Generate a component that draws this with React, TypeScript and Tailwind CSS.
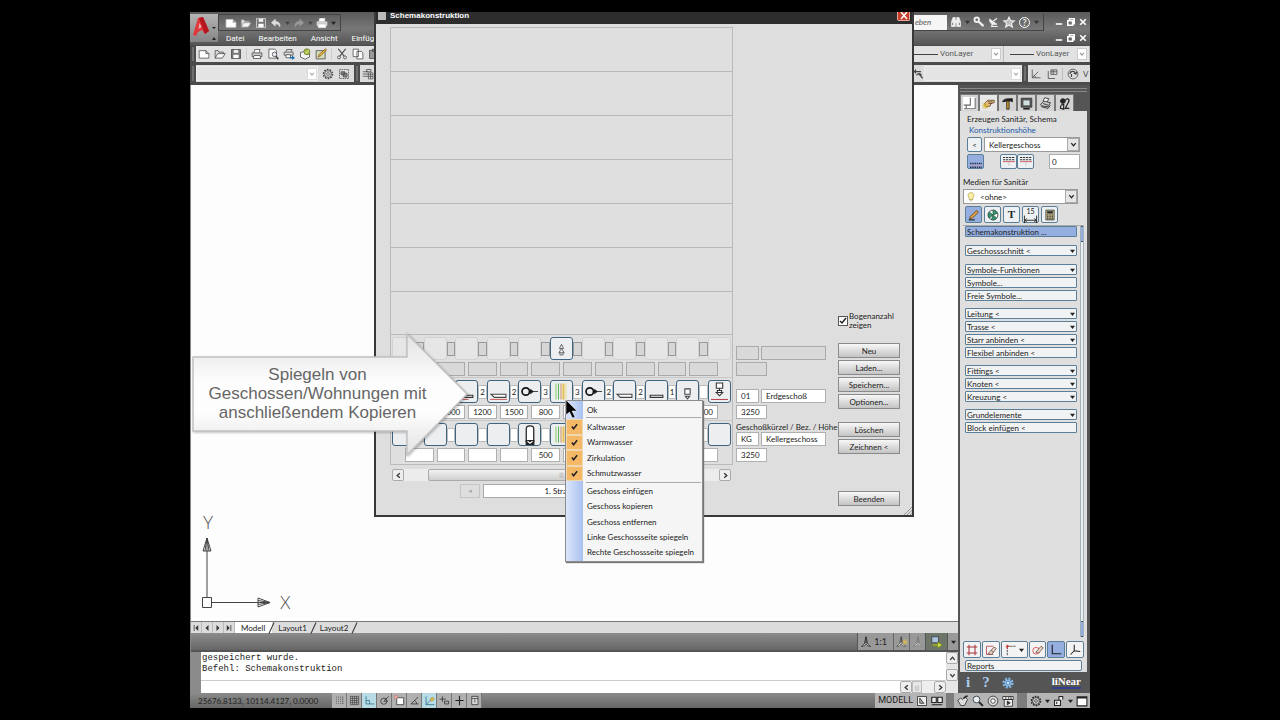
import type { ReactNode } from "react";
import clsx from "clsx";

const glyphs: Record<string, ReactNode> = {
  page: <path d="M1.5 3.5h9l4 4v6h-13zM10.5 3.5v4h4" fill="#fff" />,
  open: (
    <>
      <path d="M1.5 13.500V3.500h4l1 2h6v3" fill="#ddd" />
      <path d="M1.500 13.500l3.500-6h10l-4 6z" fill="#f6f6f6" />
    </>
  ),
  save: (
    <>
      <path d="M2 2h12v12H2z" fill="#777" />
      <path d="M5 2.500h6v4H5z" fill="#eee" stroke="none" />
      <path d="M4.500 9h7v4.500h-7z" fill="#fff" stroke="none" />
    </>
  ),
  undo: <path d="M13 13c1-5-2-7-6-7V3L2 7.500 7 12V9c3 0 5 1 6 4z" fill="currentColor" />,
  redo: <path d="M3 13c-1-5 2-7 6-7V3l5 4.500L9 12V9c-3 0-5 1-6 4z" fill="currentColor" />,
  printer: (
    <>
      <path d="M4 6l1-4h7l-1 4" fill="#fff" />
      <path d="M1.500 6.500h13v5h-13z" fill="#ccc" />
      <path d="M4 10h8l1 4H3z" fill="#fff" />
    </>
  ),
  preview: (
    <>
      <path d="M2.500 1.500h8l2 2v10h-10z" fill="#fff" />
      <circle cx="10" cy="8.500" r="3" fill="#e8eef4" />
      <path d="M12 11l3 4" strokeWidth="2" />
    </>
  ),
  plot: (
    <>
      <path d="M4 5l1-3h7l-1 3M1.500 5.500h12v4h-12z" fill="#ddd" />
      <path d="M4 9h6v4H4z" fill="#fff" />
      <path d="M9 12h3v-2l4 3-4 3v-2H9z" fill="#1d6cb0" stroke="none" />
    </>
  ),
  publish: (
    <>
      <path d="M2 6l7-2 5 2v6l-6 3-6-3z" fill="#f4f4f4" />
      <circle cx="10.500" cy="5" r="4" fill="#a8bd3f" stroke="#66752a" />
      <path d="M8 5l2 2 3-4" stroke="#eef4c0" />
    </>
  ),
  edit: (
    <>
      <path d="M1.500 3.500h12v11h-12z" fill="#d5dcbc" />
      <path d="M4 12l2-4 8-7 1.500 1.500L8 10z" fill="#e5b64b" stroke="#7c5a17" />
    </>
  ),
  cut: (
    <>
      <path d="M3 1l8 10M13 1L5 11" strokeWidth="1.600" />
      <circle cx="4" cy="12.500" r="2" />
      <circle cx="12" cy="12.500" r="2" />
    </>
  ),
  copy: <path d="M1.500 1.500h7v10h-7zM6.500 4.500h6l2 2v8h-8z" fill="#fff" />,
  paste: <path d="M2 3h12v11H2zM6 1.500h4v3H6z" fill="#999" />,
  gear: (
    <>
      <circle cx="8" cy="8" r="6" strokeWidth="2" strokeDasharray="2.200 1.500" />
      <circle cx="8" cy="8" r="4.500" fill="#ddd" />
      <circle cx="8" cy="8" r="1.800" fill="#fff" />
    </>
  ),
  blueGear: (
    <>
      <circle cx="8" cy="8" r="5.500" stroke="#7fb4e4" strokeWidth="4" strokeDasharray="2.500 1.800" />
      <circle cx="8" cy="8" r="4" fill="#5f9cd8" stroke="#a9cdec" />
      <circle cx="8" cy="8" r="1.500" fill="#e6f2fc" stroke="none" />
    </>
  ),
  blocks: (
    <>
      <path d="M2 2h12v12H2z" strokeDasharray="2 1" />
      <path d="M4 5h5v4H4zM7 7h5v5H7z" fill="#888" />
    </>
  ),
  table: (
    <>
      <path d="M1 5h7M1 8h7M1 11h7M6 2h6v3H6z" />
      <path d="M8.500 6.500h6v8h-6zM8.500 9h6M8.500 11.500h6M11.500 6.500v8" fill="#eee" />
    </>
  ),
  binoculars: (
    <>
      <path d="M2 14V8l2-6h3v12zM14 14V8l-2-6H9v12z" fill="#eee" />
      <path d="M6 6h4v3H6z" fill="#eee" />
      <path d="M3.500 9v3M12.500 9v3" stroke="#555" />
    </>
  ),
  key: (
    <>
      <circle cx="5" cy="5" r="3" strokeWidth="2.500" />
      <path d="M7.500 7.500l6.500 6" strokeWidth="3" />
    </>
  ),
  dish: (
    <>
      <path d="M2 4c0 6 4 9 10 7z" fill="#eee" />
      <path d="M7 7l5-4M4 14h9M6 10l-1 4" strokeWidth="1.600" />
    </>
  ),
  star: <path d="M8 1.500l2 4.500 5 .5-3.700 3.300 1.200 5L8 12l-4.500 2.800 1.200-5L1 6.500 6 6z" fill="#bbb" strokeWidth="1.500" />,
  axes: <path d="M3 2v11h11M3 13l8-8M5 9l3 4" />,
  axesTable: <path d="M3 4v10h9M6.500 2.500h8v6h-8zM6.500 5h8M9.500 2.500v6" />,
  swirl: (
    <>
      <circle cx="8" cy="8" r="6.500" fill="#ddd" />
      <path d="M4 8c0-4 6-5 7-1M9 7l3 1 1-3M6 8v4" strokeWidth="1.500" />
    </>
  ),
  zoomArrow: <path d="M1 4h10M3 1l-2 3 2 3M4 10c3-4 6-3 8 0M8 8l6 7" strokeWidth="2" />,
  plan: (
    <>
      <path d="M0 0h16v16H0z" fill="#fff" stroke="none" />
      <path d="M9 1v9H1M1 14.500h14V1M4 10v4" stroke="#666" strokeWidth="1.300" />
    </>
  ),
  hand: (
    <>
      <path d="M3 8l4-4h8v3l-4 1-1 3-4 1H5z" fill="#e9c08a" stroke="#5d4524" />
      <path d="M7 6h6M8 8h4" stroke="#5d4524" />
      <path d="M4 7v8M0 11h8M1 8l6 6M7 8l-6 6" stroke="#d8b21e" />
    </>
  ),
  hammer: (
    <>
      <path d="M2 6c1-4 5-4 12-4v4l-2-1H7z" fill="#222" />
      <path d="M7 5h3v10H7z" fill="#d09a2a" />
    </>
  ),
  monitor: (
    <>
      <path d="M1.500 1.500h13v11h-13z" fill="#777" />
      <path d="M3.500 3.500h9v7.500h-9z" fill="#cfe0e0" />
      <path d="M4 14.500h8" strokeWidth="2" />
    </>
  ),
  printerSmall: (
    <>
      <path d="M5 5l2-4 5 1-2 4" fill="#fff" />
      <path d="M2 9l4-4 8 2-3 5-8-1z" fill="#ccc" />
      <path d="M3 12l8 2 3-4M5 8l6 2" />
    </>
  ),
  persons: (
    <>
      <circle cx="6" cy="5" r="3" fill="#222" />
      <path d="M3 14c0-4 1-5 4-5v6zM9 4c4-4 6 0 3 4l-3 6h5" strokeWidth="1.500" />
    </>
  ),
  floorBlue: (
    <>
      <path d="M0 10h16M0 15h16" stroke="#26314f" strokeWidth="2" strokeDasharray="2 1" />
      <path d="M0 12.500h16" stroke="#c9a" />
    </>
  ),
  floorUp: (
    <>
      <path d="M0 2h16M0 5h16" stroke="#333" strokeWidth="1.500" strokeDasharray="3 1" />
      <path d="M0 7.500h16" stroke="#c33" />
      <path d="M8 8v5" stroke="#bbb" />
    </>
  ),
  pencil: (
    <>
      <path d="M3 10l8-8 3 2-8 8-4 1z" fill="#e0a04a" stroke="#5b3c10" />
      <path d="M1 14.500h8" stroke="#222" strokeWidth="1.500" />
    </>
  ),
  globe: (
    <>
      <circle cx="8" cy="8" r="6.500" fill="#fff" />
      <path d="M8 8L3 4c-2 2-2 6 0 8zM8 8V1.500c3 0 5 2 6 4zM8 8l5 4c-2 3-5 3-7 2z" fill="#37906f" stroke="#24604a" />
    </>
  ),
  dimension: <path d="M1.500 7v8M14.500 7v8M2 12h12M4 10l-2 2 2 2M12 10l2 2-2 2" />,
  calculator: (
    <>
      <path d="M2.500 1.500h11v13h-11z" fill="#d9cf9e" />
      <path d="M4.500 3.500h7v2h-7z" fill="#333" />
      <path d="M4 8h8M4 10.500h8M4 13h8" strokeDasharray="2 1" strokeWidth="1.600" />
    </>
  ),
  frameRed: <path d="M4 1v14M12 1v14M1 4h14M1 12h14" stroke="#a8333f" strokeWidth="1.400" />,
  eraseGrid: (
    <>
      <path d="M2 3h9M2 3v11h9" stroke="#a8333f" />
      <path d="M4 13l8-9 3 2-6 8z" fill="#e8d3c5" stroke="#66453c" />
      <path d="M8 8.500l3.500 2.500" stroke="#66453c" />
    </>
  ),
  corner: (
    <>
      <path d="M3 15V3h12" stroke="#222" strokeDasharray="3 1" />
      <path d="M1 3h5M3 1v5" stroke="#c33" strokeWidth="1.500" />
    </>
  ),
  eraseCircle: (
    <>
      <circle cx="5.500" cy="9" r="4.500" stroke="#c33" />
      <path d="M5 11l7-8 3 2-6 7z" fill="#e8d3c5" stroke="#66453c" />
    </>
  ),
  ell: <path d="M3 1v12h12" strokeWidth="1.500" />,
  wye: <path d="M7 1v8M7 9l8 1M7 9l-5 5" strokeWidth="1.400" />,
  dots: <path d="M3 3h11M3 6h11M3 9h11M3 12h11M13 3v11" strokeDasharray="1 2" />,
  mesh: <path d="M2 2h12v12H2zM5 2v12M8 2v12M11 2v12M2 5h12M2 8h12M2 11h12" strokeWidth="0.700" />,
  step: <path d="M3 2v11h12M3 8h5v5" stroke="#14617c" />,
  polar: (
    <>
      <circle cx="7" cy="9" r="4.500" />
      <path d="M7 9l7-7M7 9h6" />
    </>
  ),
  osnap: (
    <>
      <path d="M4 4h10v10H4z" fill="#fff" />
      <path d="M1 1h4v4H1z" fill="#eab9a7" stroke="#c77" />
    </>
  ),
  angle: <path d="M13 3L3 13h11M8 8c2 1 3 3 3 5" />,
  ducs: (
    <>
      <path d="M3 2v12h12M3 14l7-7" stroke="#14617c" />
      <path d="M9 7l3-4 3 3-4 3z" fill="#e5c04b" stroke="#a38421" />
    </>
  ),
  dyn: <path d="M1 6h9M5 2v8M8 9h6v4H8z" />,
  plus: <path d="M8 1v14M2 8h12" strokeWidth="1.600" />,
  props: <path d="M4 2h9v12H4zM4 5h9M8.500 6v5" fill="#ddd" />,
  scale: <path d="M8 1v7l-6 6 4-1 2-3 2 3 4 1-6-6M8 1L6 9M8 1l2 8" fill="#ddd" />,
  scaleSun: (
    <>
      <path d="M7 1v7l-6 6 4-1 2-3 2 3 4 1-6-6M7 1L5 9M7 1l2 8" fill="#fff" />
      <path d="M12 4v8M8 8h8M9 5l6 6M15 5l-6 6" stroke="#e5c04b" />
    </>
  ),
  layoutA: <path d="M2 2h12v12H2zM5 4v7h6M5 4l5 7" fill="#eee" />,
  layoutB: <path d="M1 3h6v7H1zM9 3h6v7H9zM1 13h14" fill="#eee" strokeWidth="1.500" />,
  pan: (
    <>
      <path d="M1 7l4-3 2 2 4-3 3 3-4 8H5z" fill="#ddd" />
      <path d="M9 4l5-3" strokeWidth="2" />
    </>
  ),
  lens: (
    <>
      <circle cx="6" cy="6" r="4.500" fill="#e6f0f6" />
      <path d="M9.500 9.500l5 5" strokeWidth="2.500" />
    </>
  ),
  wheel: (
    <>
      <circle cx="8" cy="8" r="6.500" fill="#ddd" />
      <circle cx="8" cy="8" r="3" fill="#fff" />
    </>
  ),
  motion: (
    <>
      <path d="M1 2h14v4H1zM3 6h11v9H3z" fill="#eee" />
      <path d="M5 2v4M9 2v4M12 2v4M7 8v5l4-2.500z" fill="#444" />
    </>
  ),
  lock: <path d="M2 7h8v7H2zM8 7V2h5v4M5 9v3" fill="#eee" strokeWidth="1.400" />,
  screen: <path d="M1.500 2.500h13v12h-13zM1.500 4h13" fill="#fff" strokeWidth="1.400" />,
  sync: (
    <>
      <path d="M1 1h9v8H1z" fill="#a9c4dc" stroke="#334" />
      <path d="M2 11h7V8l6 4-6 4v-3H2z" fill="#d3e03b" stroke="#6d8320" />
    </>
  ),
  up: <path d="M3 11l5-6 5 6" strokeWidth="3" />,
  down: <path d="M3 5l5 6 5-6" strokeWidth="3" />,
  left: <path d="M11 3L5 8l6 5" strokeWidth="3" />,
  right: <path d="M5 3l6 5-6 5" strokeWidth="3" />,
  bulb: <path d="M5 9C1 4 5 1 8 1s7 3 3 8v3H5zM6 14h4" fill="#fbf0a5" stroke="#9c8f3b" />,
  tub: (
    <>
      <path d="M1 10.500h14v3H4z" fill="#fff" stroke="#444" />
      <path d="M0 15.500h16" stroke="#c66" />
    </>
  ),
  tray: <path d="M1 10.500h14v3H4z" fill="#fff" stroke="#444" />,
  slab: (
    <>
      <path d="M3 11.500h11v2H3z" stroke="#333" fill="#fff" />
      <path d="M0 15.500h10" stroke="#c66" />
    </>
  ),
  slabPlain: <path d="M2 11.500h12v2H2z" stroke="#333" fill="#fff" />,
  valve: (
    <>
      <circle cx="4.500" cy="8" r="3.500" stroke="#111" strokeWidth="1.600" />
      <path d="M8 8h8M9 6l2.500 2L9 10z" stroke="#111" fill="#111" strokeWidth="0.700" />
    </>
  ),
  sink: <path d="M5.500 5.500h5v5h-5zM6 12.500h4l-2 2.500z" stroke="#444" fill="#fff" />,
  washer: (
    <>
      <path d="M5 0h6v5H5zM8 5v2M6 7h4v2H6zM5 9h6l-3 3z" stroke="#333" fill="#fff" />
      <path d="M0 15.500h16" stroke="#b45" />
    </>
  ),
  vent: <path d="M8 4l-2 4h4zM8 8l-2.500 4h5zM6.500 12v2h3v-2" stroke="#555" strokeWidth="0.800" />,
  boiler: (
    <>
      <path d="M5 3c0-3 6-3 6 0v10H5z" stroke="#222" fill="#fff" />
      <path d="M4.500 12h7v4h-7z" fill="#222" stroke="none" />
      <path d="M6 13l2 1.500 2-1.500" stroke="#fff" />
    </>
  ),
  risers: (
    <>
      <path d="M3 0v16" stroke="#b9dfa8" strokeWidth="2" />
      <path d="M5.500 0v16" stroke="#5ab65a" />
      <path d="M8 0v16" stroke="#cf8f5f" />
      <path d="M10.500 0v16" stroke="#e6c14e" strokeWidth="2" />
      <path d="M13 0v16" stroke="#ecdf9a" />
    </>
  ),
};

function Glyph({ name, className = "size-3" }: { name: string; className?: string }) {
  return (
    <svg viewBox="0 0 16 16" fill="none" stroke="currentColor" aria-hidden="true" className={clsx("shrink-0 overflow-visible", className)}>
      {glyphs[name]}
    </svg>
  );
}

function IconButton({ name, label, className, glyph }: { name: string; label: string; className?: string; glyph?: string }) {
  return (
    <button type="button" aria-label={label} className={clsx("flex items-center justify-center", className)}>
      <Glyph name={name} className={glyph} />
    </button>
  );
}

function Caret({ className = "text-[#222]" }: { className?: string }) {
  return (
    <svg viewBox="0 0 8 6" aria-hidden="true" className={clsx("h-1 w-[5px] shrink-0", className)}>
      <path d="M0 1h8L4 6z" fill="currentColor" />
    </svg>
  );
}

function WindowControls() {
  return (
    <div className="flex gap-px text-white">
      {["Minimieren", "Wiederherstellen", "Schließen"].map((label, i) => (
        <button key={label} type="button" aria-label={label} className="flex h-3 w-[11px] items-center justify-center">
          <svg viewBox="0 0 10 10" className="size-2" fill="none" stroke="currentColor" strokeWidth="2" aria-hidden="true">
            {i === 0 && <path d="M1 7.500h8" />}
            {i === 1 && <path d="M3 3V1h6v6H7M1 3.500h6V9H1z" />}
            {i === 2 && <path d="M1.500 1.500l7 7M8.500 1.500l-7 7" />}
          </svg>
        </button>
      ))}
    </div>
  );
}

const menus = ["Datei", "Bearbeiten", "Ansicht", "Einfügen"];

function TitleBar() {
  return (
    <header className="flex h-[33px] shrink-0 justify-between bg-gradient-to-b from-[#5a5a5a] via-[#777] to-[#555] pt-0.5">
      <div className="flex">
        <button type="button" aria-label="Anwendungsmenü" className="flex h-7 w-7 items-center bg-gradient-to-b from-[#b5b5b5] to-[#858585]">
          <svg viewBox="0 0 28 28" className="size-7" aria-hidden="true">
            <path d="M3 21L8 4l5-1 6 14-4 3-3-4-4 2-2 4z" fill="#e0393c" />
            <path d="M9 4l4-1 6 14-4 3z" fill="#b3161d" />
            <path d="M9.500 9l2 4-3 2z" fill="#f2b4b4" />
            <path d="M22 13h4l-2 2zM22 26l2-3 2 3z" fill="#222" />
          </svg>
        </button>
        <div>
          <div className="flex h-[17px] w-[123px] items-center gap-[3px] border border-[#444] px-1.5 text-[#ddd]">
            <IconButton name="page" label="Neu" />
            <IconButton name="open" label="Öffnen" className="text-[#888]" />
            <IconButton name="save" label="Speichern" />
            <IconButton name="undo" label="Rückgängig" />
            <Caret className="text-[#444]" />
            <IconButton name="redo" label="Wiederherstellen" className="text-[#999]" />
            <Caret className="text-[#444]" />
            <IconButton name="printer" label="Drucken" className="text-[#eee]" />
            <Caret />
          </div>
          <nav className="flex gap-3.5 pl-2 pt-0.5 font-['Roboto',sans-serif] text-[8px] leading-3 text-white">
            {menus.map((item) => (
              <button key={item} type="button">
                {item}
              </button>
            ))}
          </nav>
        </div>
      </div>
      <div className="flex w-[176px] justify-between">
        <div className="flex h-[17px] items-center gap-[3px] border-b border-r border-[#444] pr-1 text-[#eee]">
          <input aria-label="Suche" defaultValue="eben" className="h-[15px] w-[33px] bg-[#f6f6f6] pl-px text-[8px] italic text-[#555] outline-none" />
          <IconButton name="binoculars" label="Suchen" />
          <Caret className="text-[#333]" />
          <IconButton name="key" label="Abonnement" />
          <IconButton name="dish" label="Kommunikation" />
          <IconButton name="star" label="Favoriten" />
          <button type="button" aria-label="Hilfe" className="mx-px flex size-[11px] items-center justify-center rounded-full border border-white text-[9px] font-bold leading-none">
            ?
          </button>
          <Caret className="text-[#333]" />
        </div>
        <div className="flex flex-col gap-1 pr-0.5 pt-0.5">
          <WindowControls />
          <WindowControls />
        </div>
      </div>
    </header>
  );
}

function LineTypeSelect({ label, className }: { label: string; className?: string }) {
  return (
    <div className={clsx("flex h-full items-center gap-0.5 border-r border-[#bbb]", className)}>
      <span className="h-px w-6 shrink-0 bg-[#444]" />
      <span className="relative flex h-full flex-1 items-center">
        <select aria-label={label} className="w-full appearance-none font-['Roboto',sans-serif] text-[8px] text-[#555] outline-none">
          <option>VonLayer</option>
        </select>
        <span className="pointer-events-none absolute right-0.5 flex h-3 w-2.5 items-center justify-center border border-[#ccc] bg-white text-[#999]">
          <Glyph name="down" className="size-1.5" />
        </span>
      </span>
    </div>
  );
}

function EmptySelect({ label, className }: { label: string; className?: string }) {
  return (
    <span className={clsx("relative flex h-[15px] items-center border border-[#eee] bg-[#e4e4e4]", className)}>
      <select aria-label={label} className="h-full w-full appearance-none outline-none" />
      <span className="pointer-events-none absolute right-0 flex h-3 w-2.5 items-center justify-center border border-[#ddd] bg-white text-[#aaa]">
        <Glyph name="down" className="size-1.5" />
      </span>
    </span>
  );
}

function Grip() {
  return <span className="mx-0.5 my-px w-0.5 shrink-0 self-stretch bg-[#6f6f6f]" />;
}

function Toolbars() {
  return (
    <div className="flex shrink-0 flex-col gap-[3px] bg-[#4b4b4b] pb-[3px] pt-px text-[#444]">
      <div className="flex h-4 justify-between">
        <div className="flex">
          <Grip />
          <div className="flex items-center gap-1 bg-[#e2e2e2] px-0.5">
            <IconButton name="page" label="Neu" />
            <IconButton name="open" label="Öffnen" />
            <IconButton name="save" label="Speichern" />
            <span className="h-3 w-px bg-[#ccc]" />
            <IconButton name="printer" label="Drucken" />
            <IconButton name="preview" label="Vorschau" />
            <IconButton name="plot" label="Plotten" />
            <IconButton name="publish" label="Publizieren" />
            <IconButton name="edit" label="Bearbeiten" />
            <span className="h-3 w-px bg-[#ccc]" />
            <IconButton name="cut" label="Ausschneiden" />
            <IconButton name="copy" label="Kopieren" />
            <IconButton name="paste" label="Einfügen" />
          </div>
        </div>
        <div className="flex w-[176px] items-center bg-[#e2e2e2]">
          <LineTypeSelect label="Linientyp" className="w-[90px]" />
          <LineTypeSelect label="Linienstärke" className="flex-1 pl-1.5" />
        </div>
      </div>
      <div className="flex h-[17px] justify-between">
        <div className="flex">
          <Grip />
          <div className="flex items-center gap-1 bg-[#dcdcdc] pr-1">
            <EmptySelect label="Arbeitsbereich" className="w-[122px]" />
            <IconButton name="gear" label="Einstellungen" />
            <IconButton name="blocks" label="Arbeitsbereich speichern" />
          </div>
          <Grip />
          <div className="flex items-center bg-[#dcdcdc] px-0.5">
            <IconButton name="table" label="Layer" />
          </div>
        </div>
        <div className="flex w-[176px]">
          <div className="flex flex-1 items-center bg-[#dcdcdc]">
            <IconButton name="zoomArrow" label="Layer vorher" glyph="size-2.5" />
            <EmptySelect label="Benutzerkoordinatensystem" className="flex-1" />
          </div>
          <Grip />
          <div className="flex w-[62px] items-center gap-1 overflow-hidden bg-[#dcdcdc] pl-0.5 text-[8px]">
            <IconButton name="axes" label="BKS" />
            <IconButton name="axesTable" label="BKS-Liste" />
            <span className="h-3 w-px shrink-0 bg-[#bbb]" />
            <IconButton name="swirl" label="Ansichten" />
            <span>V</span>
          </div>
        </div>
      </div>
    </div>
  );
}

function UcsIcon() {
  return (
    <svg viewBox="0 0 100 104" className="mb-2 ml-1.5 h-[104px] w-[100px]" fill="none" stroke="#444" aria-hidden="true">
      <path d="M5.500 88.500h9v10h-9zM10 88.500V29M14.500 93.500H73" />
      <path d="M10 29L6 42h8zM8 42l2-13 2 13" />
      <path d="M73 93.500L61 89v9zM61 91.500l12 2-12 2" />
      <text x="6" y="20" fontSize="17" fontWeight="300" fill="#444" stroke="none" fontFamily="Lato, sans-serif">
        Y
      </text>
      <text x="83" y="100" fontSize="17" fontWeight="300" fill="#444" stroke="none" fontFamily="Lato, sans-serif">
        X
      </text>
    </svg>
  );
}

const layoutTabs = ["Modell", "Layout1", "Layout2"];

const tabArrows = [
  { label: "Erstes", d: "M1 0h1v8H1zM7 0L3 4l4 4z" },
  { label: "Zurück", d: "M6 0L2 4l4 4z" },
  { label: "Weiter", d: "M2 0l4 4-4 4z" },
  { label: "Letztes", d: "M6 0h1v8H6zM1 0l4 4-4 4z" },
];

function DrawingArea() {
  return (
    <main className="flex min-w-0 flex-1 flex-col border-l border-[#888]">
      <div className="flex flex-1 items-end bg-[#fdfdfd]">
        <UcsIcon />
      </div>
      <div className="flex h-3 shrink-0 items-center border-t border-[#777] bg-[#dcdcdc] text-[8px] leading-none text-[#222]">
        {tabArrows.map((arrow) => (
          <button key={arrow.label} type="button" aria-label={arrow.label} className="flex h-full w-[11px] items-center justify-center border-r border-[#bbb]">
            <svg viewBox="0 0 8 8" className="size-1.5" aria-hidden="true">
              <path d={arrow.d} fill="#333" />
            </svg>
          </button>
        ))}
        {layoutTabs.map((tab, i) => (
          <button key={tab} type="button" className={clsx("flex h-full items-center gap-1.5 pl-1.5", i === 0 && "bg-white")}>
            {tab}
            <span className="h-3 w-px rotate-[25deg] bg-[#333]" />
          </button>
        ))}
      </div>
      <div className="flex h-[17px] shrink-0 justify-end bg-gradient-to-b from-[#8c8c8c] to-[#666]">
        <div className="flex items-center border-l border-[#555] bg-[#999] text-[9px] text-[#222]">
          <button type="button" className="flex items-center gap-0.5 pl-0.5 pr-1.5">
            <Glyph name="scale" />
            1:1
          </button>
          <IconButton name="scaleSun" label="Beschriftung" className="h-full w-4 border-l border-[#666] text-[#444]" />
          <IconButton name="scale" label="Automatisch" className="h-full w-4 border-l border-[#666] text-[#777]" />
          <span className="flex h-full w-[23px] items-center justify-center border-x border-[#555] bg-[#6d7569]">
            <IconButton name="sync" label="Synchronisieren" />
          </span>
          <span className="flex w-2.5 justify-center">
            <Caret />
          </span>
        </div>
      </div>
      <div className="flex h-[43px] shrink-0 border-t-2 border-[#555] bg-white">
        <span className="w-2.5 shrink-0 bg-[#8b8b8b]" />
        <div className="flex flex-1 flex-col">
          <div className="flex-1 border-b border-[#ccc] pl-px pt-px font-['Liberation_Mono',monospace] text-[9px] leading-[11px] text-[#222]">
            <p>gespeichert wurde.</p>
            <p>Befehl: Schemakonstruktion</p>
          </div>
          <div className="flex h-3 justify-end">
            <input aria-label="Befehlszeile" className="min-w-0 flex-1 outline-none" />
            <ScrollButton name="left" label="Nach links" />
            <span className="flex w-2.5 items-center justify-center border border-[#bbb] bg-[#e8e8e8] text-[6px] text-[#999]">|||</span>
            <span className="w-3 bg-[#eee]" />
            <ScrollButton name="right" label="Nach rechts" />
          </div>
        </div>
        <div className="flex w-3 flex-col justify-between bg-[#e6e6e6] pb-3">
          <ScrollButton name="up" label="Nach oben" />
          <ScrollButton name="down" label="Nach unten" />
        </div>
      </div>
    </main>
  );
}

function ScrollButton({ name, label }: { name: string; label: string }) {
  return <IconButton name={name} label={label} glyph="size-[7px]" className="h-3 w-3 shrink-0 rounded-[2px] border border-[#aaa] bg-[#eee] text-[#333]" />;
}

const paletteTabs = ["plan", "hand", "hammer", "monitor", "printerSmall", "persons"];

const commandGroups = [
  [{ text: "Schemakonstruktion ...", active: true }],
  [{ text: "Geschossschnitt <", menu: true }],
  [{ text: "Symbole-Funktionen", menu: true }, { text: "Symbole..." }, { text: "Freie Symbole..." }],
  [{ text: "Leitung <", menu: true }, { text: "Trasse <", menu: true }, { text: "Starr anbinden <", menu: true }, { text: "Flexibel anbinden <" }],
  [{ text: "Fittings <", menu: true }, { text: "Knoten <", menu: true }, { text: "Kreuzung <", menu: true }],
  [{ text: "Grundelemente", menu: true }, { text: "Block einfügen <" }],
] as { text: string; menu?: boolean; active?: boolean }[][];

const boxed = "rounded-[2px] border border-[#5b7f99] bg-[#eef1f3]";

function PaletteSelect({ label, value, icon }: { label: string; value: string; icon?: string }) {
  return (
    <span className="relative flex h-[15px] flex-1 items-center border border-[#999] bg-white">
      {icon && <Glyph name={icon} className="ml-0.5 size-2.5" />}
      <select aria-label={label} className="h-full w-full appearance-none pl-1 leading-none outline-none">
        <option>{value}</option>
      </select>
      <span className="pointer-events-none absolute right-0 flex h-[13px] w-3 items-center justify-center border border-[#aaa] bg-[#e6e6e6]">
        <Glyph name="down" className="size-[7px]" />
      </span>
    </span>
  );
}

function ToolPalette() {
  return (
    <aside className="flex w-[132px] shrink-0 flex-col bg-[#555] pl-[2px] pr-[3px] text-[8px] leading-none text-[#222]">
      <div className="mb-0.5 mt-[3px] h-1 shrink-0 border-y border-[#888]" />
      <div className="flex h-[17px] shrink-0">
        {paletteTabs.map((tab, i) => (
          <IconButton
            key={tab}
            name={tab}
            label={`Palette ${i + 1}`}
            glyph="size-[13px]"
            className={clsx("w-[19px] border border-b-0 border-[#777]", i === 1 ? "bg-[#e8e8e8]" : "bg-[#d2d2d2]")}
          />
        ))}
      </div>
      <div className="flex flex-1 flex-col bg-[#dfdfdf] px-[3px] pt-1">
        <p className="pl-1">Erzeugen Sanitär, Schema</p>
        <fieldset className="px-1">
          <legend className="px-0.5 pt-[3px] text-[#1c5aa8]">Konstruktionshöhe</legend>
          <div className="mt-[3px] flex gap-0.5">
            <button type="button" className={clsx("h-[15px] w-[15px]", boxed)}>
              &lt;
            </button>
            <PaletteSelect label="Geschoss" value="Kellergeschoss" />
          </div>
          <div className="mt-0.5 flex items-center">
            <IconButton name="floorBlue" label="Höhe aktiv" className="h-[15px] w-[17px] rounded-[2px] border border-[#5b7f99] bg-[#94aee0]" />
            <span className="w-4" />
            <IconButton name="floorUp" label="Geschoss höher" className={clsx("h-[15px] w-[17px]", boxed)} />
            <IconButton name="floorUp" label="Geschoss tiefer" className={clsx("h-[15px] w-[17px]", boxed)} />
            <input aria-label="Höhe" defaultValue="0" className="ml-auto h-[15px] w-[31px] border border-[#aaa] bg-white pl-0.5 outline-none" />
          </div>
        </fieldset>
        <p className="pb-[3px] pt-[9px]">Medien für Sanitär</p>
        <div className="flex pr-[6px]">
          <PaletteSelect label="Medium" value="<ohne>" icon="bulb" />
        </div>
        <div className="mt-0.5 flex gap-0.5 border-b border-[#aaa] pb-0.5 pl-0.5">
          <IconButton name="pencil" label="Zeichnen" className="h-[17px] w-[17px] rounded-[2px] border border-[#5b7f99] bg-[#94aee0]" />
          <IconButton name="globe" label="Farben" className={clsx("h-[17px] w-[17px]", boxed)} />
          <button type="button" className={clsx("h-[17px] w-[17px] font-['Liberation_Serif',serif] text-[11px] font-bold", boxed)}>
            T
          </button>
          <button type="button" className={clsx("relative flex h-[17px] w-[17px] flex-col items-center", boxed)}>
            <span className="absolute top-px text-[7px]">15</span>
            <Glyph name="dimension" className="mt-0.5" />
          </button>
          <IconButton name="calculator" label="Berechnen" className={clsx("h-[17px] w-[17px]", boxed)} />
        </div>
        <div className="flex flex-1">
          <div className="flex flex-1 flex-col gap-[7px] pl-0.5 pr-[3px]">
            {commandGroups.map((group, g) => (
              <div key={g} className={clsx("flex flex-col gap-0.5", g < 2 && "mb-px")}>
                {group.map((item) => (
                  <button
                    key={item.text}
                    type="button"
                    className={clsx(
                      "flex h-[11px] items-center justify-between rounded-[1px] border border-[#5b7f99] px-px text-left",
                      item.active ? "bg-[#94aee0]" : "bg-[#f0f2f3]",
                    )}
                  >
                    {item.text}
                    {item.menu && <Caret />}
                  </button>
                ))}
              </div>
            ))}
          </div>
          <div className="flex w-1 flex-col justify-between border-x border-[#9fb0bb] bg-[#eee]">
            <span className="h-4 border-y border-[#456] bg-[#94aee0]" />
            <span className="h-4 border-y border-[#456] bg-[#94aee0]" />
          </div>
        </div>
        <div className="mt-1 flex gap-px">
          {["frameRed", "eraseGrid", "corner", "eraseCircle", "ell", "wye"].map((name, i) => (
            <button
              key={name}
              type="button"
              aria-label={`Werkzeug ${i + 1}`}
              className={clsx("flex h-[17px] flex-1 items-center justify-center gap-0.5 rounded-[2px] border border-[#5b7f99]", i === 4 ? "bg-[#94aee0]" : "bg-[#f3f3f3]", i === 2 && "flex-[1.6]")}
            >
              <Glyph name={name} />
              {i === 2 && <Caret />}
            </button>
          ))}
        </div>
        <button type="button" className="mx-0.5 mb-px mt-0.5 h-[11px] rounded-[2px] border border-[#5b7f99] bg-[#f3f3f3] px-px text-left">
          Reports
        </button>
      </div>
      <div className="flex h-[21px] shrink-0 items-center gap-3 px-1.5 font-['Liberation_Serif',serif] font-bold text-[#a9cdec]">
        <button type="button" className="text-[15px]">i</button>
        <button type="button" className="text-[15px]">?</button>
        <IconButton name="blueGear" label="Optionen" />
        <span className="ml-auto border-b-2 border-[#33408c] text-[11px] text-white">liNear</span>
      </div>
    </aside>
  );
}

const modes = ["dots", "mesh", "step", "polar", "osnap", "angle", "ducs", "dyn", "plus", "props"];

function StatusBar() {
  return (
    <footer className="flex h-[15px] shrink-0 items-stretch bg-gradient-to-b from-[#8a8a8a] to-[#666] text-[8px] text-[#222]">
      <span className="w-[142px] self-center pl-2">25676.8133, 10114.4127, 0.0000</span>
      {modes.map((mode, i) => (
        <IconButton
          key={mode}
          name={mode}
          label={`Modus ${i + 1}`}
          glyph="size-[11px]"
          className={clsx("w-[15px] border-r border-[#777]", i === 2 || i === 6 ? "bg-[#b9dbe6]" : "bg-[#b0b0b0]")}
        />
      ))}
      <div className="ml-auto flex items-center gap-[3px] bg-[#b5b5b5] pl-[3px] pr-0.5">
        <button type="button" className="font-['Roboto',sans-serif] text-[9px] leading-none">MODELL</button>
        <IconButton name="layoutA" label="Layout" />
        <IconButton name="layoutB" label="Layouts" />
        <span className="w-2 self-stretch bg-[#7c7c7c]" />
        <IconButton name="pan" label="Pan" />
        <IconButton name="lens" label="Zoom" />
        <IconButton name="wheel" label="SteeringWheel" />
        <IconButton name="motion" label="ShowMotion" />
        <span className="w-2.5 self-stretch bg-[#7c7c7c]" />
        <IconButton name="gear" label="Arbeitsbereich wechseln" />
        <Caret />
        <IconButton name="lock" label="Sperren" />
        <Caret />
        <IconButton name="screen" label="Vollbild" />
      </div>
    </footer>
  );
}

type Floor = {
  boxes: string[];
  links: string[];
  values: string[];
  short: string;
  name: string;
  height: string;
  disabled?: boolean;
};

const floors: Floor[] = [
  { boxes: ["", "", "", "", "", "vent", "", "", "", "", ""], links: ["", "", "", "", "", "", "", "", "", ""], values: ["", "", "", "", "", "", "", "", "", ""], short: "", name: "", height: "", disabled: true },
  {
    boxes: ["", "", "slab", "tub", "valve", "risers", "valve", "tray", "slabPlain", "sink", "washer"],
    links: ["", "", "2", "2", "3", "3", "2", "2", "1", ""],
    values: ["", "1000", "1200", "1500", "800", "", "", "", "", "1000"],
    short: "01",
    name: "Erdgeschoß",
    height: "3250",
  },
  { boxes: ["", "", "", "", "boiler", "risers", "", "", "", "", ""], links: ["", "", "", "", "", "", "", "", "", ""], values: ["", "", "", "", "500", "", "", "", "", ""], short: "KG", name: "Kellergeschoss", height: "3250" },
];

function FloorRow({ floor }: { floor: Floor }) {
  return (
    <div className="flex h-[43px] flex-col gap-0.5 border-b border-[#c8c8c8] px-px pt-0.5 last:border-b-0">
      <div className="flex items-center">
        {floor.boxes.map((box, i) => (
          <div key={i} className={clsx("flex items-center", i > 0 && "flex-1")}>
            {i > 0 && (
              <span
                className={clsx(
                  "flex h-[14px] flex-1 items-center justify-center border text-[8px] leading-none",
                  floor.disabled ? "border-[#999] bg-[#d6d6d6]" : "border-[#bbb] bg-white",
                )}
              >
                {floor.links[i - 1]}
              </span>
            )}
            <button
              type="button"
              aria-label={`Feld ${i + 1}`}
              className={clsx(
                "flex h-[23px] w-[23px] shrink-0 items-center justify-center rounded-[3px] border",
                floor.disabled && !box ? "border-[#d2d2d2] bg-[#e6e6e6]" : "border-[#3f6480] bg-[#eceef0]",
              )}
            >
              {box && <Glyph name={box} className={clsx(box === "risers" ? "h-[21px] w-4" : box === "boiler" ? "size-5" : "size-[17px]")} />}
            </button>
          </div>
        ))}
      </div>
      <div className="grid grid-cols-10 gap-x-[3px] px-[13px]">
        {floor.values.map((value, i) => (
          <input
            key={i}
            aria-label={`Länge ${i + 1}`}
            defaultValue={value}
            disabled={floor.disabled}
            className={clsx("h-[14px] w-full border text-center outline-none", floor.disabled ? "border-[#aaa] bg-[#d9d9d9]" : "border-[#b0b0b0] bg-white")}
          />
        ))}
      </div>
    </div>
  );
}

function FloorFields({ floor }: { floor: Floor }) {
  const field = clsx("h-[14px] border px-1 outline-none", floor.disabled ? "border-[#aaa] bg-[#d9d9d9]" : "border-[#b0b0b0] bg-white");
  return (
    <div className="flex h-[43px] flex-col justify-end gap-0.5 pb-0.5">
      <div className="flex gap-0.5">
        <input aria-label="Geschoßkürzel" disabled={floor.disabled} defaultValue={floor.short} className={clsx(field, "w-[23px]")} />
        <input aria-label="Bezeichnung" disabled={floor.disabled} defaultValue={floor.name} className={clsx(field, "w-[65px]")} />
      </div>
      <input aria-label="Geschoßhöhe" disabled={floor.disabled} defaultValue={floor.height} className={clsx(field, "w-[31px]")} />
    </div>
  );
}

const actionGroups = [["Neu", "Laden...", "Speichern...", "Optionen..."], ["Löschen", "Zeichnen <"], ["Beenden"]];

function SchemaDialog() {
  return (
    <section aria-label="Schemakonstruktion" className="absolute left-[184px] top-0 flex h-[505px] w-[540px] flex-col border-2 border-t-0 border-[#383838] bg-[#dedede] text-[8px] leading-none text-[#222]">
      <header className="flex h-3 shrink-0 items-start justify-between bg-[#2d2d2d] px-0.5">
        <h1 className="flex items-start gap-1 font-['Liberation_Sans',sans-serif] text-[8px] font-bold leading-[8px] text-white">
          <span className="size-2 bg-[#bbb]" />
          Schemakonstruktion
        </h1>
        <button type="button" aria-label="Schließen" className="flex h-[9px] w-[13px] items-start justify-center rounded-b-[2px] border border-t-0 border-[#e8a79d] bg-[#c5402c] text-white">
          <svg viewBox="0 0 8 8" className="size-2" stroke="currentColor" strokeWidth="1.500" aria-hidden="true">
            <path d="M1 0l6 7M7 0L1 7" />
          </svg>
        </button>
      </header>
      <div className="flex flex-1 pl-3.5 pr-3 pt-[3px]">
        <div className="w-[343px]">
          <div className="border border-[#bbb] bg-[#dfdfdf]">
            {Array.from({ length: 7 }, (_, i) => (
              <div key={i} className={clsx("border-b border-[#b9b9b9]", i < 6 ? "h-11" : "h-[43px]")} />
            ))}
            {floors.map((floor, i) => (
              <FloorRow key={i} floor={floor} />
            ))}
          </div>
          <div className="mt-1 flex h-3 px-0.5">
            <ScrollButton name="left" label="Nach links" />
            <span className="w-6 bg-[#ececec]" />
            <span className="flex flex-1 items-center justify-center rounded-[2px] border border-[#aaa] bg-gradient-to-b from-[#f2f2f2] to-[#cfcfcf] text-[6px] text-[#999]">|||</span>
            <span className="w-6 bg-[#ececec]" />
            <ScrollButton name="right" label="Nach rechts" />
          </div>
          <div className="mt-[3px] flex gap-[3px] pl-[70px]">
            <button type="button" aria-label="Vorheriger Strang" className="h-[14px] w-5 border border-[#c4c4c4] text-[6px] text-[#aaa]">
              ◄
            </button>
            <input aria-label="Strang" defaultValue="1. Strang" className="h-[14px] w-[154px] border border-[#aaa] bg-white text-center outline-none" />
          </div>
        </div>
        <div className="flex w-[100px] flex-col pl-[3px] pt-[308px]">
          <FloorFields floor={floors[0]} />
          <FloorFields floor={floors[1]} />
          <div className="relative">
            <p className="absolute top-0.5 whitespace-nowrap">Geschoßkürzel / Bez. / Höhe</p>
            <FloorFields floor={floors[2]} />
          </div>
        </div>
        <div className="ml-auto flex w-[62px] flex-col">
          <label className="mt-[285px] flex items-center leading-[9px]">
            <span className="relative flex shrink-0">
              <input type="checkbox" defaultChecked className="size-[10px] appearance-none border border-[#555] bg-white" />
              <svg viewBox="0 0 8 8" className="pointer-events-none absolute left-px top-px size-2" fill="none" stroke="#222" strokeWidth="1.500" aria-hidden="true">
                <path d="M1 4l2 2 4-5" />
              </svg>
            </span>
            <span className="pl-px">
              Bogenanzahl
              <br />
              zeigen
            </span>
          </label>
          <div className="flex flex-1 flex-col pb-[9px] pt-[13px]">
            {actionGroups.map((group, g) => (
              <div key={g} className={clsx("flex flex-col gap-0.5", g === 1 && "mt-[13px]", g === 2 && "mt-auto")}>
                {group.map((action) => (
                  <button key={action} type="button" className="h-[15px] border border-[#8a8a8a] bg-gradient-to-b from-[#f8f8f8] to-[#c4c4c4]">
                    {action}
                  </button>
                ))}
              </div>
            ))}
          </div>
        </div>
      </div>
      <svg viewBox="0 0 8 8" className="absolute bottom-0 right-0 size-2" stroke="#999" aria-hidden="true">
        <path d="M0 8l8-8M3 8l5-5M6 8l2-2" />
      </svg>
    </section>
  );
}

function MenuItem({ text, checked }: { text: string; checked?: boolean }) {
  return (
    <button type="button" role={checked ? "menuitemcheckbox" : "menuitem"} aria-checked={checked} className="flex flex-1 items-center gap-1 text-left">
      <span className={clsx("flex h-full w-[17px] items-center justify-center", checked && "border border-[#f0d8ae] bg-[#f5b866]")}>
        {checked && (
          <svg viewBox="0 0 8 8" className="size-[7px]" fill="none" stroke="#222" strokeWidth="1.800" aria-hidden="true">
            <path d="M1 4l2 2.500L7 1.500" />
          </svg>
        )}
      </span>
      {text}
    </button>
  );
}

function ContextMenu() {
  return (
    <div role="menu" className="absolute left-[375px] top-[388px] w-[138px] border border-[#8d8d8d] bg-[#f5f5f5] text-[8px] leading-none text-[#222] shadow-[1px_1px_1px_#777]">
      <div className="bg-[linear-gradient(90deg,#dbe6fb_0,#a9c1f0_17px,transparent_17px)] py-px">
        <div className="flex h-[15px]">
          <MenuItem text="Ok" />
        </div>
        <hr className="ml-5 mr-px border-[#aaa]" />
        <div className="mt-px flex h-[62px] flex-col">
          {["Kaltwasser", "Warmwasser", "Zirkulation", "Schmutzwasser"].map((text) => (
            <MenuItem key={text} text={text} checked />
          ))}
        </div>
        <hr className="ml-5 mr-px mt-px border-[#aaa]" />
        <div className="flex h-[77px] flex-col">
          {["Geschoss einfügen", "Geschoss kopieren", "Geschoss entfernen", "Linke Geschossseite spiegeln", "Rechte Geschossseite spiegeln"].map((text) => (
            <MenuItem key={text} text={text} />
          ))}
        </div>
      </div>
    </div>
  );
}

function Callout() {
  return (
    <div className="absolute left-[2px] top-[320px] h-[126px] w-[278px] font-['Liberation_Sans',sans-serif]">
      <svg viewBox="0 0 278 126" className="absolute inset-0 size-full drop-shadow-[1px_1px_1px_rgba(0,0,0,0.25)]" aria-hidden="true">
        <defs>
          <linearGradient id="calloutFill" x1="0" y1="0" x2="0" y2="1">
            <stop offset="0" stopColor="#e2e2e2" />
            <stop offset="0.400" stopColor="#fdfdfd" />
            <stop offset="0.650" stopColor="#fdfdfd" />
            <stop offset="1" stopColor="#e2e2e2" />
          </linearGradient>
        </defs>
        <path d="M1 25h214V2l60 60-60 61V99H1z" fill="url(#calloutFill)" stroke="#c2c2c2" strokeWidth="1.500" />
      </svg>
      <p className="relative pr-[27px] pt-[33px] text-center text-[17px] leading-[19px] text-[#666]">
        Spiegeln von
        <br />
        Geschossen/Wohnungen mit
        <br />
        anschließendem Kopieren
      </p>
    </div>
  );
}

export default function App() {
  return (
    <div className="flex h-screen justify-center bg-black py-3 font-['Lato',sans-serif]">
      <div className="relative flex w-full max-w-[900px] flex-col bg-[#555]">
        <TitleBar />
        <Toolbars />
        <div className="flex min-h-0 flex-1">
          <DrawingArea />
          <ToolPalette />
        </div>
        <StatusBar />
        <SchemaDialog />
        <Callout />
        <ContextMenu />
        <svg viewBox="0 0 14 20" className="absolute left-[375px] top-[387px] h-5 w-3.5" aria-hidden="true">
          <path d="M1 1v15l3.500-3 3 6 2.500-1-3-6h5z" fill="#000" stroke="#fff" strokeWidth="0.500" />
        </svg>
      </div>
    </div>
  );
}
